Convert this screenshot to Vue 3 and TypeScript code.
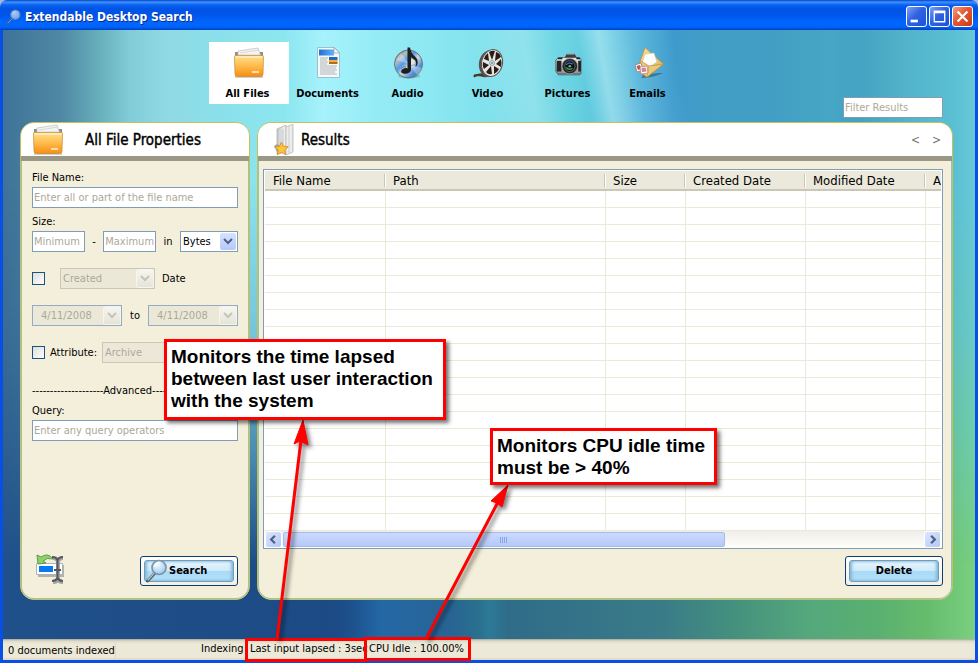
<script setup lang="ts">
import { ref } from 'vue'

interface Tab {
  id: string
  label: string
}

interface Column {
  label: string
  width: number | null
}

const tabs: Tab[] = [
  { id: 'folder', label: 'All Files' },
  { id: 'document', label: 'Documents' },
  { id: 'audio', label: 'Audio' },
  { id: 'video', label: 'Video' },
  { id: 'camera', label: 'Pictures' },
  { id: 'mail', label: 'Emails' },
]

const columns: Column[] = [
  { label: 'File Name', width: 121 },
  { label: 'Path', width: 220 },
  { label: 'Size', width: 80 },
  { label: 'Created Date', width: 120 },
  { label: 'Modified Date', width: 120 },
  { label: 'A', width: null },
]

const rowCount = 20
const activeTab = ref('folder')
const byDate = ref(false)
const byAttribute = ref(false)
</script>

<template>
  <div class="window">
    <svg class="sprite" aria-hidden="true">
      <defs>
        <linearGradient id="g-folder" x1="0" y1="0" x2="0" y2="1">
          <stop offset="0" stop-color="#ffdf8e" />
          <stop offset="0.5" stop-color="#ffbb4c" />
          <stop offset="1" stop-color="#f78d12" />
        </linearGradient>
        <linearGradient id="g-disc" x1="0" y1="0" x2="1" y2="1">
          <stop offset="0" stop-color="#3d4348" />
          <stop offset="0.25" stop-color="#b4bec5" />
          <stop offset="0.4" stop-color="#4f9be8" />
          <stop offset="0.55" stop-color="#d4d8da" />
          <stop offset="0.75" stop-color="#4a90de" />
          <stop offset="1" stop-color="#5d6266" />
        </linearGradient>
        <linearGradient id="g-silver" x1="0" y1="0" x2="0" y2="1">
          <stop offset="0" stop-color="#f2f2f2" />
          <stop offset="1" stop-color="#8c8c8c" />
        </linearGradient>
        <linearGradient id="g-page" x1="0" y1="0" x2="1" y2="0">
          <stop offset="0" stop-color="#1f6fd8" />
          <stop offset="1" stop-color="#63b4f6" />
        </linearGradient>
        <radialGradient id="g-glass" cx="0.4" cy="0.3" r="0.8">
          <stop offset="0" stop-color="#f4fbff" />
          <stop offset="1" stop-color="#8fc3ee" />
        </radialGradient>
        <linearGradient id="g-mail" x1="0" y1="0" x2="1" y2="1">
          <stop offset="0" stop-color="#f8e3a4" />
          <stop offset="1" stop-color="#dcae50" />
        </linearGradient>
        <linearGradient id="g-door" x1="0" y1="0" x2="1" y2="0">
          <stop offset="0" stop-color="#c4c4c4" />
          <stop offset="1" stop-color="#f7f7f7" />
        </linearGradient>
      </defs>

      <symbol id="folder" viewBox="0 0 32 32">
        <path d="M2 29h28v2H2z" fill="#000" opacity="0.18" />
        <path d="M2 5h4l1-1h5v6H2zM27 5h3v6h-3z" fill="#8b8f92" />
        <path d="M5 4l20-3 3 9H5z" fill="#f4f4f4" stroke="#bcbcbc" stroke-width="0.7" />
        <path d="M7 6l19-3M6 8h21" stroke="#cfcfcf" stroke-width="0.8" />
        <path d="M1.5 9.500q0-1 1-1h27q1 0 1 1L30 27q0 2.500-2.500 2.500h-23Q2 29.500 2 27z" fill="url(#g-folder)" stroke="#c98a2c" stroke-width="0.7" />
        <path d="M2.500 10h27" stroke="#fff0c4" stroke-width="1.400" />
        <path d="M19 25h7" stroke="#fff3d0" stroke-width="1.600" />
      </symbol>

      <symbol id="document" viewBox="0 0 32 32">
        <path d="M4.500 0.500h17l5 5v25h-22z" fill="#f4f9fb" stroke="#9ec0cc" />
        <path d="M6 2.500h15v6H6z" fill="url(#g-page)" />
        <path d="M21 0.500v5.500h5.500z" fill="#fff" stroke="#8fa3b2" stroke-width="0.800" />
        <path d="M7 11h8M7 13h7M7 15h8M7 17h7M7 19h17M7 21h16M7 23h17M7 25h15M7 27h17" stroke="#b3b3b3" stroke-width="1" />
        <path d="M16 10h8.500v3H16z" fill="#2767c4" />
        <path d="M16 13h8.500v2H16z" fill="#f0b52c" />
        <path d="M16 15h8.500v2H16z" fill="#b46a24" />
      </symbol>

      <symbol id="audio" viewBox="0 0 32 32">
        <ellipse cx="16" cy="29" rx="11" ry="2.500" fill="#000" opacity="0.18" />
        <circle cx="15.500" cy="17" r="14" fill="url(#g-disc)" stroke="#6d757b" />
        <path d="M16 17L3 13a14 14 0 0 1 5-7zM16 17l13 4a14 14 0 0 1-5 7z" fill="#fff" opacity="0.3" />
        <circle cx="19" cy="15" r="3.500" fill="#dfe5e8" stroke="#888" stroke-width="0.700" />
        <path d="M14.500 0.500h2.500q1 6 5.500 9.500 4 4 1 9-1 1-1 0 2-5-2-7l-2.500-2v12.500c0 3-4 5-8 4-3-1-2-4 1-5 2-1 3.500 0 3.500 0z" fill="#1d1f21" />
        <path d="M8 22c1-2 3-2.500 5-2" stroke="#7d8388" fill="none" />
      </symbol>

      <symbol id="video" viewBox="0 0 32 32">
        <path d="M1 28q7-2 12-1l7 1q-8 3-12 1-3-1-7 1z" fill="#5a3a24" stroke="#2c1c12" stroke-width="0.600" />
        <ellipse cx="16.500" cy="16.500" rx="10.500" ry="13.500" transform="rotate(12 16.500 16.500)" fill="#54504b" />
        <ellipse cx="19" cy="16" rx="10.500" ry="13.500" transform="rotate(12 19 16)" fill="#e6e6e4" stroke="#5c5a56" />
        <g fill="#2b1c14">
          <path d="M19 13L16 5q3-2 6-1zM22 14l1-9q4 1 5 5zM23 17l5-5q1 4 0 8zM21 19l5 3q-2 4-5 5zM18 19l1 8q-4 1-6-2zM16 18l-5 4q-2-3-1-7zM16 14l-5-2q1-4 4-6z" />
        </g>
        <circle cx="19" cy="16" r="2.500" fill="#dadada" stroke="#777" stroke-width="0.600" />
        <circle cx="19" cy="16" r="1" fill="#3fa7b0" />
      </symbol>

      <symbol id="camera" viewBox="0 0 32 32">
        <g transform="translate(1 4) scale(0.93 0.82)">
          <path d="M4 28h24v2H4z" fill="#000" opacity="0.25" />
          <path d="M12 7l2-4h8l2 4v4H12z" fill="#3b3d40" />
          <path d="M14 3.500h8" stroke="#b9bcc0" stroke-width="1.500" />
          <path d="M4 9l6-1h16l3 2v18H4L2 25V11z" fill="url(#g-silver)" stroke="#56585c" />
          <path d="M3 12h5v13H3zM26 12h3v13h-3z" fill="#222427" />
          <path d="M4 9h5M24 9h4" stroke="#222" stroke-width="2" />
          <ellipse cx="17" cy="18.500" rx="8.500" ry="9.500" fill="#26282b" stroke="#aaa" />
          <ellipse cx="17" cy="18.500" rx="5.500" ry="6.500" fill="#0b0d0f" stroke="#666" />
          <path d="M13 17q3-4 7-1" stroke="#4168d0" stroke-width="1.600" fill="none" />
          <path d="M13 20q3 4 7 1" stroke="#45a03c" stroke-width="1.600" fill="none" />
          <circle cx="17" cy="18.500" r="1.500" fill="#5fae9c" />
        </g>
      </symbol>

      <symbol id="mail" viewBox="0 0 32 32">
        <path d="M8 31q12 0 22-5l-4 0-16 2z" fill="#000" opacity="0.3" />
        <path d="M12 0.500L30.500 17 14 30 4 23z" fill="url(#g-mail)" stroke="#b98d3c" stroke-width="0.800" />
        <path d="M12 7l9-1 3 9-9 6-6-5z" fill="#fff" stroke="#c9c0a2" stroke-width="0.600" />
        <path d="M30.500 17L16 19 8 14l-4 9 10 7z" fill="#ecc878" stroke="#b98d3c" stroke-width="0.700" />
        <path d="M16 19l-2 11" stroke="#c99c48" stroke-width="0.700" />
        <path d="M2 18l6-2 2 7-6 2z" fill="#fff" stroke="#a66" stroke-width="0.700" />
        <path d="M3.500 19l3.500-1 1 4-3 1z" fill="#ad5e55" />
        <path d="M7 20l7-1 1 7-7 1z" fill="#fff" stroke="#b5788a" stroke-width="0.700" />
        <path d="M8.500 21l4-0.500 1 4-4.500 0.500z" fill="#cf8397" />
      </symbol>

      <symbol id="lens" viewBox="0 0 24 24">
        <path d="M9.500 14.500L2.500 22" stroke="#4d565e" stroke-width="3" stroke-linecap="round" />
        <path d="M9 14.500l-6 6.500" stroke="#b4bec5" stroke-width="1.400" stroke-linecap="round" />
        <circle cx="14" cy="8.500" r="7" fill="url(#g-glass)" stroke="#7f95ab" stroke-width="1.700" />
        <path d="M9.500 8q1-4 5-4.500" stroke="#fff" stroke-width="1.500" fill="none" />
      </symbol>
    </svg>

    <header class="titlebar">
      <svg class="title-icon"><use href="#lens" /></svg>
      <h1>Extendable Desktop Search</h1>
      <div class="caption-buttons">
        <button type="button" aria-label="Minimize">
          <svg viewBox="0 0 21 21"><path d="M4 14h8v3H4z" fill="#fff" /></svg>
        </button>
        <button type="button" aria-label="Maximize">
          <svg viewBox="0 0 21 21"><path d="M4 4h13v13H4zM5.500 7v8.500h10V7z" fill="#fff" fill-rule="evenodd" /></svg>
        </button>
        <button type="button" class="close" aria-label="Close">
          <svg viewBox="0 0 21 21"><path d="M5 5l11 11M16 5L5 16" stroke="#fff" stroke-width="2.400" /></svg>
        </button>
      </div>
    </header>

    <main class="desktop">
      <div class="toolbar">
        <nav class="tabs">
          <button
            v-for="tab in tabs"
            :key="tab.id"
            type="button"
            class="tab"
            :class="{ active: tab.id === activeTab }"
            @click="activeTab = tab.id"
          >
            <svg><use :href="'#' + tab.id" /></svg>
            <span>{{ tab.label }}</span>
          </button>
        </nav>
        <input class="field filter" type="text" placeholder="Filter Results" aria-label="Filter Results" />
      </div>

      <div class="panels">
        <section class="panel properties">
          <div class="panel-head">
            <svg class="head-icon"><use href="#folder" /></svg>
            <h2>All File Properties</h2>
          </div>
          <form class="form" @submit.prevent>
            <label for="file-name">File Name:</label>
            <input id="file-name" class="field" type="text" placeholder="Enter all or part of the file name" />

            <label class="size-label" for="size-min">Size:</label>
            <div class="row">
              <input id="size-min" class="field short" type="text" placeholder="Minimum" />
              <span>-</span>
              <input class="field short" type="text" placeholder="Maximum" aria-label="Maximum size" />
              <label for="unit">in</label>
              <span class="combo unit">
                <select id="unit"><option>Bytes</option></select>
                <svg viewBox="0 0 16 17"><path d="M4 6l4 4 4-4" /></svg>
              </span>
            </div>

            <div class="row spaced">
              <input id="by-date" v-model="byDate" type="checkbox" class="check" aria-label="Filter by date" />
              <span class="combo created off">
                <select id="date-kind" :disabled="!byDate"><option>Created</option></select>
                <svg viewBox="0 0 16 17"><path d="M4 6l4 4 4-4" /></svg>
              </span>
              <label class="date-label" for="date-kind">Date</label>
            </div>

            <div class="row spaced dates">
              <span class="combo date off">
                <input id="date-from" type="text" value="4/11/2008" aria-label="From date" :disabled="!byDate" />
                <svg viewBox="0 0 16 17"><path d="M4 6l4 4 4-4" /></svg>
              </span>
              <label for="date-to">to</label>
              <span class="combo date off">
                <input id="date-to" type="text" value="4/11/2008" :disabled="!byDate" />
                <svg viewBox="0 0 16 17"><path d="M4 6l4 4 4-4" /></svg>
              </span>
            </div>

            <div class="row spaced attribute">
              <input id="by-attr" v-model="byAttribute" type="checkbox" class="check" />
              <label for="by-attr">Attribute:</label>
              <span class="combo grow off">
                <select aria-label="Attribute" :disabled="!byAttribute"><option>Archive</option></select>
                <svg viewBox="0 0 16 17"><path d="M4 6l4 4 4-4" /></svg>
              </span>
            </div>

            <div class="divider">--------------------Advanced--------------------</div>
            <label for="query">Query:</label>
            <input id="query" class="field" type="text" placeholder="Enter any query operators" />

            <div class="actions">
              <button type="button" class="clear" aria-label="Clear fields">
                <svg viewBox="0 0 32 32">
                  <path d="M3 12h26v12H3z" fill="#000" opacity="0.25" />
                  <path d="M1.500 10.500h26v11h-26z" fill="#fff" stroke="#a9b4c0" />
                  <path d="M4 13h14v6H4z" fill="#0877f4" />
                  <path d="M2 2l1 9 8-1-3-2q4-4 10-2Q13-1 6 4z" fill="#8fd06a" stroke="#4f9440" stroke-width="0.900" />
                  <path d="M18 5q4 0 5 3 1-3 5-3M18 29q4 0 5-3 1 3 5 3M23 8v18" stroke="#a2a4a6" stroke-width="4" fill="none" />
                  <path d="M17 4q4 0 5.500 3 1.500-3 5.500-3M17 28q4 0 5.500-3 1.500 3 5.500 3M22.500 7v18M19 17h7" stroke="#55595d" stroke-width="2" fill="none" />
                </svg>
              </button>
              <button type="submit" class="glossy">
                <span class="face"><svg><use href="#lens" /></svg>Search</span>
              </button>
            </div>
          </form>
        </section>

        <section class="panel results">
          <div class="panel-head">
            <svg class="head-icon" viewBox="2 0 28 32">
              <path d="M6 5l9-4v27l-9 2z" fill="url(#g-door)" stroke="#b2b2b2" stroke-width="0.800" />
              <path d="M8 7l5-2v21l-5 1z" fill="#d6dadd" />
              <path d="M15 3l7-3v28l-7 3z" fill="#ededed" stroke="#bababa" stroke-width="0.800" />
              <path d="M18 2v27M21.500 0v28" stroke="#cfcfcf" />
              <path d="M3 22l3-2 4 2v6H6z" fill="#a7a7a7" />
              <path d="M10.500 18l2 4.300 4.700 0.500-3.500 3.200 1 4.700-4.200-2.400-4.200 2.400 1-4.700-3.500-3.200 4.700-0.500z" fill="#ffc43a" stroke="#d2912a" stroke-width="0.900" />
            </svg>
            <h2>Results</h2>
            <div class="pager">
              <a href="#previous">&lt;</a>
              <a href="#next">&gt;</a>
            </div>
          </div>
          <div class="results-body">
            <div class="listview">
              <div class="grid-clip">
                <table>
                  <colgroup>
                    <col v-for="c in columns" :key="c.label" :style="c.width ? { width: c.width + 'px' } : {}" />
                  </colgroup>
                  <thead>
                    <tr><th v-for="c in columns" :key="c.label" scope="col">{{ c.label }}</th></tr>
                  </thead>
                  <tbody>
                    <tr v-for="r in rowCount" :key="r"><td v-for="c in columns" :key="c.label"></td></tr>
                  </tbody>
                </table>
              </div>
              <div class="scrollbar">
                <button type="button" aria-label="Scroll left">
                  <svg viewBox="0 0 16 16"><path d="M9.500 4l-4 4 4 4" /></svg>
                </button>
                <div class="track"><div class="thumb"><i></i><i></i><i></i><i></i></div></div>
                <button type="button" aria-label="Scroll right">
                  <svg viewBox="0 0 16 16"><path d="M6.500 4l4 4-4 4" /></svg>
                </button>
              </div>
            </div>
            <button type="button" class="glossy delete"><span class="face">Delete</span></button>
          </div>
        </section>
      </div>
    </main>

    <footer class="status">
      <span class="count">0 documents indexed</span>
      <span class="indexing">Indexing</span>
      <span class="lapsed">Last input lapsed : 3sec</span>
      <span class="idle">CPU Idle : 100.00%</span>
    </footer>

    <div class="notes">
      <div class="mark mark-lapsed"></div>
      <div class="mark mark-idle"></div>
      <svg class="arrows" viewBox="0 0 978 663">
        <g fill="#f00" stroke="#f00">
          <path d="M277 639L301 440" stroke-width="3" />
          <path d="M303 420l-9 24 6-3 8 4z" stroke-width="1" />
          <path d="M426 639L498 502" stroke-width="3" />
          <path d="M508 485l-17 16 6 2 5 4z" stroke-width="1" />
        </g>
      </svg>
      <p class="callout callout-lapsed">Monitors the time lapsed<br />between last user interaction<br />with the system</p>
      <p class="callout callout-idle">Monitors CPU idle time<br />must be &gt; 40%</p>
    </div>
  </div>
</template>

<style>
body {
  margin: 0;
  background: #a9b6dc;
}
</style>

<style scoped>
* {
  box-sizing: border-box;
}

.window {
  position: relative;
  display: flex;
  flex-direction: column;
  min-height: 100vh;
  font: 11px/16px "DejaVu Sans Condensed", "DejaVu Sans", Tahoma, sans-serif;
  color: #000;
  overflow: hidden;
}

button,
input,
select {
  font: inherit;
  color: inherit;
  margin: 0;
}

button {
  padding: 0;
  border: 0;
  background: none;
}

.sprite {
  position: absolute;
  width: 0;
  height: 0;
}

/* Title bar */
.titlebar {
  display: flex;
  align-items: center;
  height: 30px;
  padding: 3px 5px 0 6px;
  border-radius: 7px 7px 0 0;
  background: linear-gradient(#0a3fc4 0, #3c93ff 2px, #0a62f2 5px, #0053e4 9px, #0055ea 15px, #0066ff 22px, #0064fb 27px, #0040c0 30px);
}

.title-icon {
  width: 16px;
  height: 16px;
  opacity: 0.7;
}

.titlebar h1 {
  margin: 0 0 0 3px;
  font: bold 12px/18px "DejaVu Sans Condensed", "DejaVu Sans", sans-serif;
  color: #fff;
  text-shadow: 1px 1px 0 #0a2a90;
}

.caption-buttons {
  display: flex;
  gap: 2px;
  margin-left: auto;
}

.caption-buttons button {
  width: 21px;
  height: 21px;
  border: 1px solid #fff;
  border-radius: 3px;
  background: linear-gradient(135deg, #7ca2f8, #2f62e2 45%, #1f50d8);
}

.caption-buttons .close {
  background: linear-gradient(135deg, #f0a08a, #e25732 45%, #c93c14);
}

.caption-buttons svg {
  display: block;
  width: 19px;
  height: 19px;
}

/* Backdrop */
.desktop {
  position: relative;
  flex: 1;
  display: flex;
  flex-direction: column;
  padding: 0 22px 39px 17px;
  border: solid #0a4fe4;
  border-width: 0 3px;
  background: linear-gradient(90deg, #20508a 0, #1c4a84 34%, #1d528e 36%, #2468a6 39%, #286494 46%, #2a708e 49%, #2c7a98 50%, #2f6c88 52%, #3a7c88 68%, #44907e 75%, #55a87c 83%, #5ab070 90%, #66bc6c 95%, #78d080 100%);
}

.desktop::before {
  content: "";
  position: absolute;
  inset: 0;
  background:
    linear-gradient(80deg, transparent 63%, rgb(220 250 255 / 45%) 65%, rgb(190 240 250 / 20%) 68%, transparent 72%),
    linear-gradient(80deg, transparent 53%, rgb(255 255 255 / 18%) 58%, transparent 61%),
    linear-gradient(90deg, #3f7298 0, #4f88a4 6%, #68b0bc 10%, #80ccd8 13%, #90dae4 17%, #8ae0ea 22%, #8ce6f0 29%, #a6f2fc 33%, #96ecf6 38%, #8ce8f2 44%, #78dce8 54%, #6cd4e2 58%, #58c4dc 62%, #46a8d4 66%, #3e9acc 69%, #429ec4 73%, #429ec4 79%, #46a6c4 85%, #44a2c2 88%, #50b0c8 92%, #5cc0d4 98%, #68c8d8 100%);
  mask-image: linear-gradient(#000 0, #000 25%, rgb(0 0 0 / 80%) 50%, rgb(0 0 0 / 45%) 68%, transparent 88%);
}

.toolbar {
  position: relative;
  display: flex;
  align-items: flex-start;
  height: 92px;
  padding: 12px 10px 0 189px;
}

.tabs {
  display: flex;
}

.tab {
  display: flex;
  flex-direction: column;
  align-items: center;
  gap: 7px;
  width: 80px;
  height: 62px;
  padding-top: 5px;
  font-weight: bold;
  white-space: nowrap;
}

.tab span {
  padding-right: 3px;
}

.tab.active {
  background: #fff;
}

.tab svg {
  width: 32px;
  height: 32px;
}

.field {
  width: 100%;
  height: 21px;
  padding: 0 1px;
  border: 1px solid #7f9db9;
  background: #fff;
  outline: 0;
}

.field::placeholder {
  color: #aca899;
  opacity: 1;
}

.filter {
  width: 100px;
  margin: 55px 0 0 auto;
}

/* Panels */
.panels {
  position: relative;
  flex: 1;
  display: flex;
  gap: 7px;
}

.panel {
  display: flex;
  flex-direction: column;
  border: 1px solid #c6c152;
  border-radius: 14px;
  background: #f4efdb;
  box-shadow: inset 0 0 0 1px #9ac2b4;
  overflow: hidden;
}

.properties {
  width: 230px;
}

.results {
  flex: 1;
  min-width: 0;
}

.panel-head {
  display: flex;
  align-items: center;
  height: 38px;
  padding: 0 11px;
  border-bottom: 5px solid #9a9786;
  background: #fff;
}

.results .panel-head {
  padding-left: 15px;
}

.panel-head h2 {
  margin: 0;
  font: 15px/20px "DejaVu Sans Condensed", "DejaVu Sans", sans-serif;
  -webkit-text-stroke: 0.4px #000;
  white-space: nowrap;
}

.head-icon {
  width: 32px;
  height: 32px;
}

.results .head-icon {
  width: 28px;
}

.properties h2 {
  margin-left: 21px;
}

.pager {
  display: flex;
  gap: 12px;
  margin-left: auto;
}

.pager a {
  font-size: 12px;
  color: #77756a;
  text-decoration: none;
}

/* Properties form */
.form {
  flex: 1;
  display: flex;
  flex-direction: column;
  padding: 9px 11px 13px;
}

.form > label {
  margin-bottom: 1px;
}

.form > .size-label {
  margin-top: 6px;
}

.row {
  display: flex;
  align-items: center;
  justify-content: space-between;
}

.spaced {
  margin-top: 16px;
}

.short {
  width: 53px;
}

.combo {
  position: relative;
  display: flex;
  height: 21px;
  border: 1px solid #7f9db9;
  background: #fff;
}

.combo select,
.combo input {
  appearance: none;
  width: 100%;
  padding: 0 18px 0 2px;
  border: 0;
  background: transparent;
  opacity: 1;
}

.combo svg {
  position: absolute;
  top: 1px;
  right: 1px;
  width: 16px;
  height: 17px;
  border-radius: 2px;
  background: linear-gradient(#d6e2ff, #b6c8f8);
  pointer-events: none;
}

.combo path {
  fill: none;
  stroke: #4d6185;
  stroke-width: 2;
}

.off {
  border-color: #c9c7ba;
  background: #ebe8d8;
  color: #aca899;
}

.off svg {
  background: linear-gradient(#f6f5ef, #e6e4d8);
  box-shadow: 0 0 0 1px #f7f5ec;
}

.off path {
  stroke: #c6c4b4;
}

.unit {
  width: 58px;
}

.created {
  width: 95px;
  margin-left: 15px;
}

.date-label {
  flex: 1;
  margin-left: 7px;
}

.date {
  width: 90px;
  border-color: #93acc2;
}

.date input {
  padding-left: 8px;
}

.attribute {
  gap: 5px;
}

.attribute .grow {
  flex: 1;
}

.check {
  appearance: none;
  width: 13px;
  height: 13px;
  border: 1px solid #1c5180;
  background: linear-gradient(135deg, #dcdcd7, #fff);
}

.divider {
  margin: 20px 0 4px;
  overflow: hidden;
  white-space: nowrap;
}

.actions {
  display: flex;
  justify-content: space-between;
  align-items: flex-end;
  margin-top: auto;
}

.clear {
  padding: 0 0 1px 2px;
}

.clear svg {
  display: block;
  width: 34px;
  height: 32px;
}

.glossy {
  width: 98px;
  height: 30px;
  padding: 3px;
  border: 1px solid #0c3c74;
  border-radius: 3px;
  background: linear-gradient(#fff, #f2efe4);
}

.face {
  display: flex;
  align-items: center;
  justify-content: center;
  height: 22px;
  border: 1px solid #6f9dba;
  border-radius: 3px;
  background: linear-gradient(#e6f4fd, #cfeafa 48%, #a9dbf7 52%, #b2e0f8);
  box-shadow: inset 2px 0 3px #82b8dc, inset -2px 0 3px #82b8dc;
  font-weight: bold;
}

.glossy:not(.delete) .face {
  justify-content: flex-start;
}

.face svg {
  width: 24px;
  height: 24px;
}

/* Results */
.results-body {
  flex: 1;
  display: flex;
  flex-direction: column;
  padding: 8px 9px 13px 5px;
}

.listview {
  flex: 1;
  display: flex;
  flex-direction: column;
  padding: 1px 1px 0;
  border: 1px solid #7f9db9;
  background: #fff;
}

.grid-clip {
  flex: 1;
  overflow: hidden;
}

table {
  width: 100%;
  table-layout: fixed;
  border-collapse: separate;
  border-spacing: 0;
}

th {
  position: relative;
  height: 20px;
  padding: 2px 0 0 7px;
  border-bottom: 2px solid #cbc7b8;
  background: #ebe9db;
  font-size: 13px;
  line-height: 16px;
  font-weight: normal;
  text-align: left;
  white-space: nowrap;
  overflow: hidden;
}

th:first-child {
  padding-left: 8px;
}

th:not(:last-child)::after {
  content: "";
  position: absolute;
  top: 3px;
  right: 0;
  height: 13px;
  border-left: 1px solid #c9c6b6;
  border-right: 1px solid #fff;
}

td {
  height: 17px;
  padding: 0;
  border-bottom: 1px solid #ece9d8;
  border-right: 1px solid #ece9d8;
}

td:last-child {
  border-right: 0;
}

.scrollbar {
  display: flex;
  height: 17px;
  background: linear-gradient(#f0eeea, #fefefb);
}

.scrollbar button {
  width: 17px;
  border: 1px solid #fff;
  border-radius: 3px;
  background: linear-gradient(135deg, #dbe5ff, #b4c8f6);
}

.scrollbar svg {
  display: block;
  width: 15px;
  height: 15px;
}

.scrollbar path {
  fill: none;
  stroke: #4d6185;
  stroke-width: 2.400;
}

.track {
  flex: 1;
  padding: 1px;
}

.thumb {
  display: flex;
  justify-content: center;
  align-items: center;
  gap: 1px;
  width: 69%;
  height: 15px;
  border: 1px solid #a6bce6;
  border-radius: 2px;
  background: linear-gradient(#cbd9ff, #b5c9f8);
}

.thumb i {
  width: 1px;
  height: 6px;
  background: #8aa6e4;
}

.delete {
  align-self: flex-end;
  margin-top: 7px;
}

/* Status bar */
.status {
  display: flex;
  height: 24px;
  padding: 2px 5px 0;
  border: solid #0a4fe4;
  border-width: 0 3px 3px;
  background: linear-gradient(#a9a695 0, #dedbcb 2px, #ece9d8 5px, #ece9d8 18px, #d9d6c6 100%);
}

.status span {
  white-space: nowrap;
}

.count {
  width: 108px;
  padding-top: 2px;
  border-right: 1px solid #dcd9c9;
}

.indexing {
  margin-left: 85px;
  width: 49px;
}

.lapsed {
  width: 119px;
}

/* Annotations lie over the window */
.notes {
  position: absolute;
  inset: 0;
  pointer-events: none;
}

.arrows {
  position: absolute;
  left: 0;
  top: 0;
  width: 978px;
  height: 663px;
  filter: drop-shadow(3px 3px 2px rgb(0 0 0 / 50%));
}

.mark {
  position: absolute;
  border: 3px solid #f00;
  height: 24px;
}

.mark-lapsed {
  left: 245px;
  top: 638px;
  width: 122px;
}

.mark-idle {
  left: 364px;
  top: 637px;
  width: 107px;
}

.callout {
  position: absolute;
  margin: 0;
  padding: 4px;
  border: 3px solid #f00;
  background: #fff;
  box-shadow: 3px 3px 4px rgb(0 0 0 / 55%);
  font: bold 19px/22px "Liberation Sans", Arial, sans-serif;
  white-space: nowrap;
}

.callout-lapsed {
  left: 164px;
  top: 339px;
  width: 282px;
  height: 81px;
}

.callout-idle {
  left: 490px;
  top: 428px;
  width: 227px;
  height: 57px;
}
</style>
